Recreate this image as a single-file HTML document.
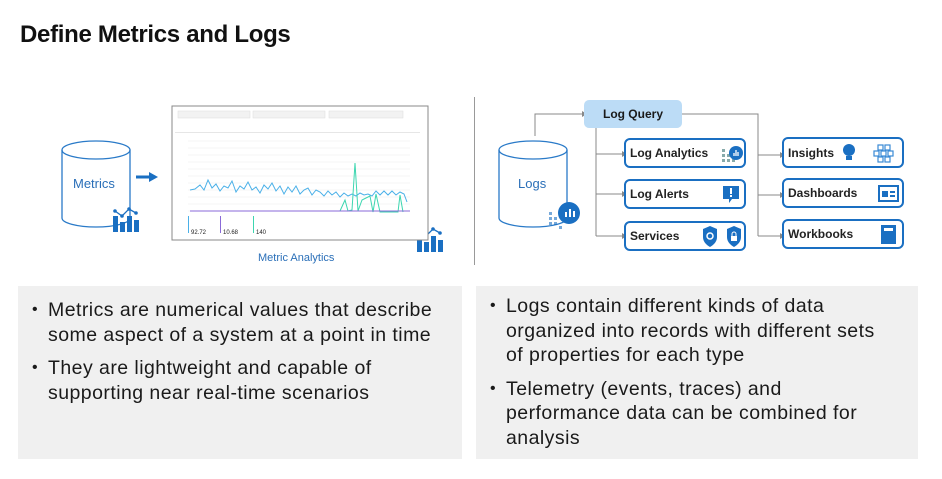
<!DOCTYPE html>
<html><head><style>
body{margin:0;width:942px;height:479px;background:#fff;position:relative;overflow:hidden;font-family:"Liberation Sans",sans-serif;color:#1a1a1a}
.abs{position:absolute}
h1{position:absolute;left:20px;top:21px;margin:0;font-size:24px;font-weight:bold;letter-spacing:-0.3px;color:#111}
.panel{position:absolute;top:286px;height:173px;background:#f0f0f0}
.panel ul{margin:0;padding:0;list-style:none}
.panel li{position:relative;padding-left:30px;font-size:19.5px;line-height:24.5px;margin-bottom:9px;white-space:nowrap;letter-spacing:0.45px}
.panel li:before{content:"•";position:absolute;left:14px;top:0;font-size:16px}
.box{position:absolute;border:2px solid #1a6fc2;border-radius:6px;background:#fff;font-size:12px;font-weight:bold;color:#222;box-sizing:border-box;padding-left:4px;display:flex;align-items:center}
</style></head><body>
<h1>Define Metrics and Logs</h1>
<div class="abs" style="left:474px;top:97px;width:1px;height:168px;background:#999"></div>

<svg class="abs" style="left:0;top:0" width="942" height="280">
<g fill="none" stroke="#2a7ac8" stroke-width="1.3">
<ellipse cx="96" cy="150" rx="34" ry="9"/>
<path d="M62 150 V218 A34 9 0 0 0 130 218 V150"/>
<ellipse cx="533" cy="150" rx="34" ry="9"/>
<path d="M499 150 V218 A34 9 0 0 0 567 218 V150"/>
</g>
<text x="73" y="188" font-size="13" fill="#2a6fb8" font-family="Liberation Sans">Metrics</text>
<text x="518" y="188" font-size="13" fill="#2a6fb8" font-family="Liberation Sans">Logs</text>
<path d="M136 177 H150" stroke="#1a6fc2" stroke-width="3"/><path d="M149 172 L158 177 L149 182Z" fill="#1a6fc2"/>
<g fill="#1a6fc2">
<rect x="113" y="216" width="5" height="16"/><rect x="120" y="222" width="5" height="10"/><rect x="127" y="216" width="5" height="16"/><rect x="134" y="220" width="5" height="12"/>
<rect x="417" y="236" width="5" height="16"/><rect x="424" y="242" width="5" height="10"/><rect x="431" y="236" width="5" height="16"/><rect x="438" y="240" width="5" height="12"/>
</g>
<g fill="#1a6fc2"><circle cx="115" cy="211" r="1.8"/><circle cx="122" cy="216" r="1.8"/><circle cx="129" cy="209" r="1.8"/><circle cx="136" cy="213" r="1.8"/><circle cx="419" cy="231" r="1.8"/><circle cx="426" cy="236" r="1.8"/><circle cx="433" cy="229" r="1.8"/><circle cx="440" cy="233" r="1.8"/></g>
<path d="M115 211 L122 216 L129 209 L136 213 M419 231 L426 236 L433 229 L440 233" stroke="#1a6fc2" stroke-width="1.3" fill="none"/>
<rect x="172" y="106" width="256" height="134" fill="#fff" stroke="#888" stroke-width="1"/>
<g fill="#f2f2f2" stroke="#ddd" stroke-width="0.5"><rect x="178" y="111" width="72" height="7"/><rect x="253" y="111" width="72" height="7"/><rect x="329" y="111" width="74" height="7"/></g>
<rect x="175" y="132" width="245" height="0.5" fill="#ccc"/>
<g stroke="#eee" stroke-width="0.6">
<path d="M188 141H410M188 148H410M188 155H410M188 162H410M188 169H410M188 176H410M188 183H410M188 190H410M188 197H410M188 204H410M188 211H410"/></g>
<path d="M190 190 L195 189 L200 185 L204 190 L208 180 L212 188 L216 184 L220 191 L224 186 L228 188 L232 181 L236 192 L240 186 L244 189 L248 182 L252 190 L256 187 L260 193 L264 185 L268 189 L272 183 L276 191 L280 186 L284 194 L288 187 L292 192 L296 186 L300 194 L304 190 L308 188 L312 195 L316 190 L320 192 L324 196 L328 191 L332 195 L336 192 L340 197 L344 193 L348 196 L352 194 L356 196 L360 193 L364 195 L368 194 L372 196 L376 191 L380 195 L384 191 L388 195 L392 191 L396 195 L400 192 L404 194 L407 202" stroke="#4ab0e8" stroke-width="1" fill="none"/>
<path d="M340 211 L345 200 L348 211 L352 210 L355 163 L358 211 L362 200 L366 198 L370 196 L373 212 L376 194 L380 212 L398 212 L400 195 L403 212" stroke="#3dd6b0" stroke-width="1" fill="none"/>
<path d="M190 211 L410 211" stroke="#8a6ad8" stroke-width="1"/>
<rect x="188" y="216" width="1" height="17" fill="#4ab0e8"/><rect x="220" y="216" width="1" height="17" fill="#8a6ad8"/><rect x="253" y="216" width="1" height="17" fill="#3dd6b0"/>
<text x="191" y="234" font-size="6" fill="#222">92.72</text><text x="223" y="234" font-size="6" fill="#222">10.68</text><text x="256" y="234" font-size="6" fill="#222">140</text>
<text x="258" y="261" font-size="11" fill="#2a6fb8" font-family="Liberation Sans">Metric Analytics</text>
<g stroke="#888" stroke-width="1" fill="none">
<path d="M535 136 V114 H582"/>
<path d="M596 128 V236 M596 154 H622 M596 194 H622 M596 236 H622"/>
<path d="M682 114 H758 V236 M758 155 H780 M758 195 H780 M758 236 H780"/>
</g>
<g fill="#888"><path d="M582 111 L587 114 L582 117Z M622 151 L627 154 L622 157Z M622 191 L627 194 L622 197Z M622 233 L627 236 L622 239Z M780 152 L785 155 L780 158Z M780 192 L785 195 L780 198Z M780 233 L785 236 L780 239Z"/></g>
<g fill="#1a6fc2">
<circle cx="569" cy="213" r="11"/>
<rect x="549" y="212" width="3" height="3" opacity=".6"/><rect x="549" y="217" width="3" height="3" opacity=".6"/><rect x="554" y="222" width="3" height="3" opacity=".6"/><rect x="559" y="226" width="3" height="3" opacity=".6"/><rect x="554" y="217" width="3" height="3" opacity=".6"/><rect x="549" y="222" width="3" height="3" opacity=".6"/>
</g>
<g fill="#fff"><rect x="565" y="212" width="2" height="5"/><rect x="569" y="209" width="2" height="8"/><rect x="573" y="211" width="2" height="6"/></g>
</svg>

<div class="abs" style="left:584px;top:100px;width:98px;height:28px;background:#bcdcf6;border-radius:5px;font-size:12px;font-weight:bold;display:flex;align-items:center;justify-content:center">Log Query</div>
<div class="box" style="left:624px;top:138px;width:122px;height:30px">Log Analytics
<svg class="abs" style="left:96px;top:5px" width="22" height="18"><g fill="#8aa"><rect x="0" y="4" width="3" height="3"/><rect x="0" y="9" width="3" height="3"/><rect x="0" y="14" width="3" height="3"/><rect x="5" y="14" width="3" height="3"/><rect x="10" y="14" width="3" height="3"/><rect x="5" y="9" width="3" height="3"/></g><circle cx="14" cy="8" r="7" fill="#1a6fc2"/><path d="M12 11V8M14 11V5M16 11V7" stroke="#fff" stroke-width="1.3"/></svg></div>
<div class="box" style="left:624px;top:179px;width:122px;height:30px">Log Alerts
<svg class="abs" style="left:96px;top:4px" width="20" height="20"><path d="M1 1H17V14H10L7 18V14H1Z" fill="#1a6fc2"/><rect x="8" y="3" width="2" height="6" fill="#fff"/><rect x="8" y="10" width="2" height="2" fill="#fff"/></svg></div>
<div class="box" style="left:624px;top:221px;width:122px;height:30px">Services
<svg class="abs" style="left:76px;top:3px" width="40" height="22"><path d="M1 3 L8 0 L15 3 V11 Q15 17 8 21 Q1 17 1 11Z M25 3 L32 0 L39 3 V11 Q39 17 32 21 Q25 17 25 11Z" fill="#1a6fc2"/><circle cx="8" cy="10" r="3" fill="none" stroke="#fff" stroke-width="1.5"/><rect x="29" y="10" width="6" height="5" fill="#fff"/><path d="M30 10V8a2 2 0 0 1 4 0V10" stroke="#fff" fill="none"/></svg></div>
<div class="box" style="left:782px;top:137px;width:122px;height:31px;padding-left:4px">Insights
<svg class="abs" style="left:58px;top:4px" width="58" height="20"><circle cx="7" cy="7" r="6" fill="#1a6fc2"/><rect x="4" y="13" width="6" height="4" fill="#1a6fc2"/><g fill="none" stroke="#3a8ad6" stroke-width="1.2"><rect x="36" y="2" width="5" height="5"/><rect x="43" y="2" width="5" height="5"/><rect x="32" y="8" width="5" height="5"/><rect x="39" y="8" width="5" height="5"/><rect x="46" y="8" width="5" height="5"/><rect x="36" y="14" width="5" height="5"/><rect x="43" y="14" width="5" height="5"/></g></svg></div>
<div class="box" style="left:782px;top:178px;width:122px;height:30px">Dashboards
<svg class="abs" style="left:94px;top:5px" width="22" height="18"><rect x="1" y="1" width="19" height="15" fill="none" stroke="#1a6fc2" stroke-width="2"/><rect x="4" y="6" width="6" height="6" fill="#1a6fc2"/><rect x="12" y="6" width="5" height="2" fill="#1a6fc2"/><rect x="12" y="10" width="5" height="2" fill="#1a6fc2"/></svg></div>
<div class="box" style="left:782px;top:219px;width:122px;height:30px">Workbooks
<svg class="abs" style="left:96px;top:3px" width="18" height="22"><rect x="1" y="1" width="15" height="19" fill="#1a6fc2"/><rect x="4" y="4" width="9" height="3" fill="#fff"/></svg></div>

<div class="panel" style="left:18px;width:444px">
<ul style="padding-top:12px"><li>Metrics are numerical values that describe<br>some aspect of a system at a point in time</li><li>They are lightweight and capable of<br>supporting near real-time scenarios</li></ul></div>
<div class="panel" style="left:476px;width:442px">
<ul style="padding-top:8px"><li>Logs contain different kinds of data<br>organized into records with different sets<br>of properties for each type</li><li>Telemetry (events, traces) and<br>performance data can be combined for<br>analysis</li></ul></div>
</body></html>
